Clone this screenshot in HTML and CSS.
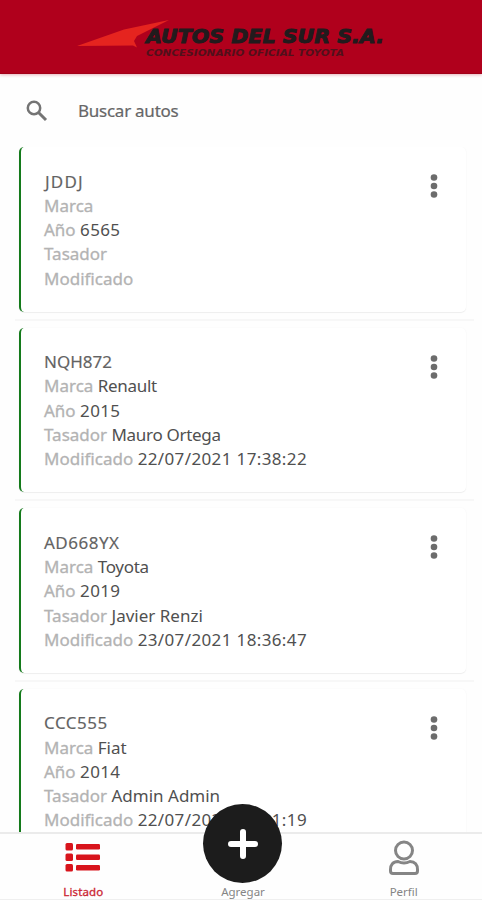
FILE: index.html
```html
<!DOCTYPE html>
<html lang="es">
<head>
<meta charset="utf-8">
<title>Autos del Sur S.A.</title>
<link rel="stylesheet" href="styles.css">
</head>
<body>
<div class="app">
  <header class="header">
    <svg class="logo" width="310" height="44" viewBox="0 0 310 44" role="img" aria-label="Autos del Sur S.A.">
      <path d="M0 30 L47 13.500 L92 4 L60 20 L57 25 L60 31.500 L56 29.500 Z" fill="#e5241f"/>
      <text class="logo-name" x="69" y="27" textLength="238" lengthAdjust="spacingAndGlyphs">AUTOS DEL SUR S.A.</text>
      <text class="logo-sub" x="69" y="39.500" textLength="198" lengthAdjust="spacingAndGlyphs">CONCESIONARIO OFICIAL TOYOTA</text>
    </svg>
  </header>
  <div class="search">
    <svg width="22" height="22" viewBox="0 0 22 22"><circle cx="8" cy="8" r="6.200" fill="none" stroke="#747474" stroke-width="2.500"/><path d="M12.500 12.500 L20 20" stroke="#747474" stroke-width="3"/></svg>
    <span class="search-text">Buscar autos</span>
  </div>
  <main class="list">
    <article class="card">
      <div class="info"><div class="plate wide">JDDJ</div><div><i>Marca</i></div><div><i>Año</i> <span class="date">6565</span></div><div><i>Tasador</i></div><div><i>Modificado</i></div></div>
      <svg class="more" width="8" height="24" viewBox="0 0 8 24"><circle cx="4" cy="3.500" r="3.300"/><circle cx="4" cy="12" r="3.300"/><circle cx="4" cy="20.500" r="3.300"/></svg>
    </article>
    <article class="card">
      <div class="info"><div class="plate tight">NQH872</div><div><i>Marca</i> <span class="value">Renault</span></div><div><i>Año</i> <span class="date">2015</span></div><div><i>Tasador</i> <span class="value">Mauro Ortega</span></div><div><i>Modificado</i> <span class="date">22/07/2021 17:38:22</span></div></div>
      <svg class="more" width="8" height="24" viewBox="0 0 8 24"><circle cx="4" cy="3.500" r="3.300"/><circle cx="4" cy="12" r="3.300"/><circle cx="4" cy="20.500" r="3.300"/></svg>
    </article>
    <article class="card">
      <div class="info"><div class="plate">AD668YX</div><div><i>Marca</i> <span class="value">Toyota</span></div><div><i>Año</i> <span class="date">2019</span></div><div><i>Tasador</i> Javier Renzi</div><div><i>Modificado</i> <span class="date">23/07/2021 18:36:47</span></div></div>
      <svg class="more" width="8" height="24" viewBox="0 0 8 24"><circle cx="4" cy="3.500" r="3.300"/><circle cx="4" cy="12" r="3.300"/><circle cx="4" cy="20.500" r="3.300"/></svg>
    </article>
    <article class="card">
      <div class="info"><div class="plate">CCC555</div><div><i>Marca</i> Fiat</div><div><i>Año</i> <span class="date">2014</span></div><div><i>Tasador</i> Admin Admin</div><div><i>Modificado</i> <span class="date">22/07/2021 17:31:19</span></div></div>
      <svg class="more" width="8" height="24" viewBox="0 0 8 24"><circle cx="4" cy="3.500" r="3.300"/><circle cx="4" cy="12" r="3.300"/><circle cx="4" cy="20.500" r="3.300"/></svg>
    </article>
  </main>
  <nav class="nav">
    <a class="tab active">
      <svg width="36" height="30" viewBox="0 0 36 30" fill="#d8141c"><rect x="0.500" y="1" width="7.500" height="7.500" rx="1.500"/><rect x="0.500" y="11.500" width="7.500" height="7.500" rx="1.500"/><rect x="0.500" y="22" width="7.500" height="7.500" rx="1.500"/><rect x="11" y="2" width="24" height="5.500" rx="1.200"/><rect x="11" y="12.500" width="24" height="5.500" rx="1.200"/><rect x="11" y="23" width="24" height="5.500" rx="1.200"/></svg>
      <span>Listado</span>
    </a>
    <a class="tab add"><span>Agregar</span></a>
    <a class="tab profile">
      <svg width="30" height="36" viewBox="0 0 30 36" fill="none" stroke="#858585" stroke-width="3"><circle cx="15" cy="10.500" r="8.500"/><path d="M9 21.500 Q15 24.500 21 21.500 C26 21.500 28.500 25 28.500 29.500 V31 Q28.500 33.500 26 33.500 H4 Q1.500 33.500 1.500 31 V29.500 C1.500 25 4 21.500 9 21.500 Z"/></svg>
      <span>Perfil</span>
    </a>
    <div class="fab"><svg width="30" height="30" viewBox="0 0 30 30"><path d="M15 3 V27 M3 15 H27" stroke="#fff" stroke-width="6" stroke-linecap="round"/></svg></div>
  </nav>
</div>
</body>
</html>
```
FILE: styles.css
```css
* { box-sizing: border-box; }
body { margin: 0; background: #fefefe; font-family: "Noto Sans", sans-serif; }
.app { width: 482px; height: 900px; display: flex; flex-direction: column; overflow: hidden; }
.header { height: 74px; flex: none; background: #b0001c; padding: 16px 0 0 77px; border-bottom: 1px solid #a20018; box-shadow: 0 1px 3px rgba(176, 0, 28, .3); }
.logo { display: block; }
.logo-name { font: italic bold 20px "DejaVu Sans", sans-serif; fill: #211b1d; stroke: #211b1d; stroke-width: 1px; }
.logo-sub { font: italic bold 9px "DejaVu Sans", sans-serif; fill: #51101b; }
.search { height: 73px; flex: none; display: flex; align-items: center; gap: 29px; padding-left: 26px; }
.search-text { font-size: 17px; letter-spacing: -.25px; color: #666; -webkit-text-stroke: .2px #666; padding-left: 1px; }
.list { flex: 1; min-height: 0; overflow: hidden; padding: 0 15px; }
.card { height: 164.600px; margin: 0 1px 16px 4px; padding: 22.500px 28.500px 0 23px; display: flex; justify-content: space-between; border-left: 2px solid #147a1b; border-radius: 5px; background: #fff; box-shadow: 0 1px 1px rgba(0, 0, 0, .06), 0 0 2px rgba(0, 0, 0, .035); position: relative; }
.card::after { content: ""; position: absolute; left: -6px; right: -8px; bottom: -9px; height: 2px; background: #f7f7f7; }
.info { font-size: 17px; line-height: 24.300px; color: #505050; white-space: nowrap; }
.info i { font-style: normal; color: #b3b3b3; -webkit-text-stroke: .3px #b3b3b3; }
.plate { color: #636363; letter-spacing: .5px; -webkit-text-stroke: .15px #636363; }
.tight { letter-spacing: 0; }
.wide { letter-spacing: 1.200px; padding-left: 1px; }
.value { letter-spacing: -.3px; }
.date { letter-spacing: .37px; }
.more { margin-top: 4.500px; fill: #6c6c6c; }
.nav { height: 68px; flex: none; display: flex; position: relative; padding-left: 3px; border-top: 2px solid #ebebeb; border-bottom: 1px solid #efefef; background: #fefefe; }
.tab { flex: 1; display: flex; flex-direction: column; align-items: center; justify-content: flex-end; font-size: 11.500px; line-height: 14px; color: #858585; }
.tab svg { margin-bottom: 13px; }
.active { padding-left: 2px; }
.add { padding-left: 3px; }
.profile { padding-left: 4px; }
.profile svg { margin-bottom: 9px; }
.active { color: #cb2633; letter-spacing: .15px; -webkit-text-stroke: .3px #cb2633; }
.fab { position: absolute; left: 203px; top: -30px; width: 79px; height: 79px; border-radius: 50%; background: #1c1c1c; display: flex; align-items: center; justify-content: center; }
```
